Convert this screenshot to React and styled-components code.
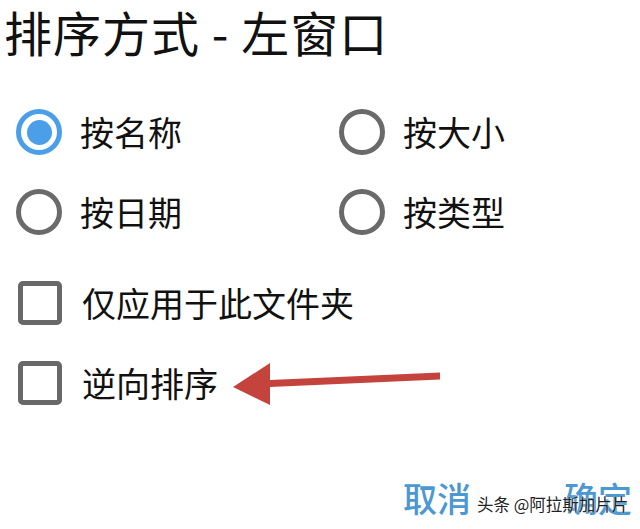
import React, { useState } from 'react';
import styled, { createGlobalStyle } from 'styled-components';

const GlobalStyle = createGlobalStyle`
    html, body {
        margin: 0;
        padding: 0;
        background: #fff;
    }
    body {
        font-family: 'Noto Sans CJK SC', 'Noto Sans', sans-serif;
        color: #111;
    }
`;

const Dialog = styled.div`
    position: relative;
    width: 640px;
    height: 529px;
    overflow: hidden;
    background: #fff;
    display: flex;
    flex-direction: column;
`;

const Title = styled.h1`
    margin: 0;
    padding: 0 0 0 4px;
    font-size: 48px;
    line-height: 62px;
    font-weight: 400;
    letter-spacing: 1px;
    color: #111;
`;

const OptionGrid = styled.div`
    display: grid;
    grid-template-columns: 323px auto;
    grid-auto-rows: 80px;
    padding: 30px 0 0 16px;
`;

const Option = styled.label`
    display: flex;
    align-items: center;
    gap: 18px;
    cursor: pointer;
`;

const Radio = styled.span`
    box-sizing: border-box;
    width: 46px;
    height: 46px;
    border-radius: 50%;
    border: 5px solid ${p => (p.$checked ? '#4a9fe8' : '#6a6a6a')};
    display: flex;
    align-items: center;
    justify-content: center;

    &::after {
        content: '';
        width: 25px;
        height: 25px;
        border-radius: 50%;
        background: #4a9fe8;
        display: ${p => (p.$checked ? 'block' : 'none')};
    }
`;

const Label = styled.span`
    font-size: 34px;
    line-height: 40px;
    color: #111;
`;

const CheckList = styled.div`
    display: flex;
    flex-direction: column;
    padding: 11px 0 0 18px;
`;

const CheckRow = styled.label`
    height: 80px;
    display: flex;
    align-items: center;
    gap: 20px;
    cursor: pointer;
`;

const Box = styled.span`
    box-sizing: border-box;
    width: 44px;
    height: 44px;
    border: 5px solid #686868;
    border-radius: 5px;
    background: ${p => (p.$checked ? '#686868' : '#fff')};
`;

const Footer = styled.div`
    display: flex;
    justify-content: flex-end;
    gap: 93px;
    padding: 55px 8px 0 0;
`;

const Action = styled.button`
    border: 0;
    background: none;
    padding: 0;
    font-family: inherit;
    font-size: 34px;
    line-height: 40px;
    font-weight: 500;
    color: #4b98d2;
    cursor: pointer;
`;

// red annotation arrow drawn on top of the dialog
const Pointer = styled.svg`
    position: absolute;
    left: 230px;
    top: 360px;
`;

const Watermark = styled.div`
    position: absolute;
    left: 477px;
    top: 494px;
    font-size: 16.5px;
    line-height: 20px;
    color: #222;
    white-space: nowrap;
    text-shadow: 0 0 2px #fff;
`;

const sortOptions = ['按名称', '按大小', '按日期', '按类型'];

const App = () => {
    const [sortBy, setSortBy] = useState('按名称');
    const [onlyFolder, setOnlyFolder] = useState(false);
    const [reverse, setReverse] = useState(false);

    return (
        <>
            <GlobalStyle />
            <Dialog>
                <Title>排序方式 - 左窗口</Title>

                <OptionGrid>
                    {sortOptions.map(opt => (
                        <Option key={opt} onClick={() => setSortBy(opt)}>
                            <Radio $checked={sortBy === opt} />
                            <Label>{opt}</Label>
                        </Option>
                    ))}
                </OptionGrid>

                <CheckList>
                    <CheckRow onClick={() => setOnlyFolder(v => !v)}>
                        <Box $checked={onlyFolder} />
                        <Label>仅应用于此文件夹</Label>
                    </CheckRow>
                    <CheckRow onClick={() => setReverse(v => !v)}>
                        <Box $checked={reverse} />
                        <Label>逆向排序</Label>
                    </CheckRow>
                </CheckList>

                <Footer>
                    <Action>取消</Action>
                    <Action>确定</Action>
                </Footer>

                <Pointer width="215" height="50" viewBox="0 0 215 50">
                    <path d="M40 20 L210 12.5 L210 19.5 L40 27 Z" fill="#c4443d" />
                    <path d="M3 27 L40 3 L40 45 Z" fill="#c4443d" />
                </Pointer>

                <Watermark>头条 @阿拉斯加片片</Watermark>
            </Dialog>
        </>
    );
};

export default App;
